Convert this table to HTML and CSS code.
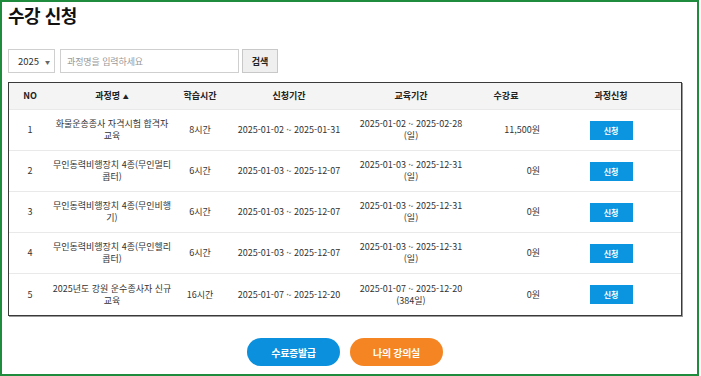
FILE: index.html
```html
<!DOCTYPE html>
<html lang="ko">
<head>
<meta charset="utf-8">
<title>수강 신청</title>
<link rel="stylesheet" href="styles.css">
</head>
<body>
<div class="frame">
  <h1 class="title">수강 신청</h1>
  <form class="search">
    <div class="select"><span>2025</span><span class="arrow">▼</span></div>
    <input class="keyword" type="text" placeholder="과정명을 입력하세요">
    <button class="btn-search" type="button">검색</button>
  </form>
  <table class="courses">
    <colgroup>
      <col class="c-no"><col class="c-name"><col class="c-hour"><col class="c-apply"><col class="c-edu"><col class="c-fee"><col class="c-btn">
    </colgroup>
    <thead>
      <tr><th>NO</th><th>과정명 <span class="sort">▲</span></th><th>학습시간</th><th>신청기간</th><th>교육기간</th><th>수강료</th><th>과정신청</th></tr>
    </thead>
    <tbody>
      <tr><td>1</td><td class="name">화물운송종사 자격시험 합격자 교육</td><td>8시간</td><td>2025-01-02 ~ 2025-01-31</td><td>2025-01-02 ~ 2025-02-28<br>(일)</td><td class="fee">11,500원</td><td><button class="btn-apply" type="button">신청</button></td></tr>
      <tr><td>2</td><td class="name">무인동력비행장치 4종(무인멀티콥터)</td><td>6시간</td><td>2025-01-03 ~ 2025-12-07</td><td>2025-01-03 ~ 2025-12-31<br>(일)</td><td class="fee">0원</td><td><button class="btn-apply" type="button">신청</button></td></tr>
      <tr><td>3</td><td class="name">무인동력비행장치 4종(무인비행기)</td><td>6시간</td><td>2025-01-03 ~ 2025-12-07</td><td>2025-01-03 ~ 2025-12-31<br>(일)</td><td class="fee">0원</td><td><button class="btn-apply" type="button">신청</button></td></tr>
      <tr><td>4</td><td class="name">무인동력비행장치 4종(무인헬리콥터)</td><td>6시간</td><td>2025-01-03 ~ 2025-12-07</td><td>2025-01-03 ~ 2025-12-31<br>(일)</td><td class="fee">0원</td><td><button class="btn-apply" type="button">신청</button></td></tr>
      <tr><td>5</td><td class="name">2025년도 강원 운수종사자 신규 교육</td><td>16시간</td><td>2025-01-07 ~ 2025-12-20</td><td>2025-01-07 ~ 2025-12-20<br>(384일)</td><td class="fee">0원</td><td><button class="btn-apply" type="button">신청</button></td></tr>
    </tbody>
  </table>
  <div class="actions">
    <a class="pill pill-blue" href="#">수료증발급</a>
    <a class="pill pill-orange" href="#">나의 강의실</a>
  </div>
</div>
</body>
</html>
```

FILE: styles.css
```css
html, body {
  margin: 0;
  padding: 0;
  background: #fff;
}
body {
  width: 701px;
  height: 376px;
  font-family: "Noto Sans CJK KR", "Noto Sans", sans-serif;
  color: #333;
}
.frame {
  box-sizing: border-box;
  width: 699px;
  height: 376px;
  border: 2px solid #1f8b3d;
  padding: 0 15px 0 6px;
}
.title {
  margin: 0;
  padding-top: 1px;
  font-size: 18px;
  line-height: 24px;
  font-weight: 700;
  color: #111;
  letter-spacing: -0.5px;
}
.search {
  display: flex;
  align-items: stretch;
  height: 24px;
  margin: 22px 0 0;
}
.select {
  box-sizing: border-box;
  width: 47px;
  display: flex;
  align-items: center;
  justify-content: space-between;
  padding: 0 4px 0 9px;
  border: 1px solid #cfcfcf;
  font-size: 9.5px;
  color: #333;
}
.arrow {
  font-size: 5px;
  color: #666;
}
.keyword {
  box-sizing: border-box;
  width: 179px;
  margin-left: 5px;
  padding: 0 6px;
  border: 1px solid #cfcfcf;
  font-family: inherit;
  font-size: 9px;
  letter-spacing: -0.1px;
  outline: none;
}
.keyword::placeholder {
  color: #999;
}
.btn-search {
  box-sizing: border-box;
  width: 36px;
  margin-left: 3px;
  padding: 0;
  border: 1px solid #c8c8c8;
  background: #efefef;
  font-family: inherit;
  font-size: 9px;
  font-weight: 700;
  color: #222;
}
.courses {
  width: 674px;
  margin-top: 9px;
  table-layout: fixed;
  border-collapse: separate;
  border-spacing: 0;
  border: 1px solid #3a3a3a;
  box-shadow: 1px 1px 0 #9a9a9a;
  font-size: 9px;
  line-height: 12px;
}
.c-no { width: 42px; }
.c-name { width: 122px; }
.c-hour { width: 54px; }
.c-apply { width: 124px; }
.c-edu { width: 120px; }
.c-fee { width: 70px; }
.c-btn { width: 140px; }
.courses th {
  height: 26px;
  padding: 0 2px;
  background: #f4f4f4;
  border-bottom: 1px solid #e9e9e9;
  font-weight: 700;
  color: #222;
  text-align: center;
}
.sort {
  font-size: 6px;
}
.courses td {
  height: 40px;
  padding: 0 4px;
  border-bottom: 1px solid #e9e9e9;
  text-align: center;
  vertical-align: middle;
  color: #333;
}
.courses td.name {
  padding: 0 1px;
}
.courses tbody tr:last-child td {
  border-bottom: 0;
  height: 41px;
}
.courses td.fee {
  text-align: right;
  padding-right: 1px;
}
.btn-apply {
  width: 43px;
  height: 19px;
  padding: 0;
  border: 0;
  background: #0b95e0;
  color: #fff;
  font-family: inherit;
  font-size: 8px;
  font-weight: 700;
  vertical-align: middle;
}
.actions {
  width: 674px;
  display: flex;
  justify-content: center;
  gap: 10px;
  margin-top: 22px;
}
.pill {
  width: 93px;
  height: 28px;
  border-radius: 14px;
  display: flex;
  align-items: center;
  justify-content: center;
  color: #fff;
  font-size: 10px;
  font-weight: 700;
  text-decoration: none;
  letter-spacing: -0.3px;
}
.pill-blue { background: #0a90dc; }
.pill-orange { background: #f58423; }
```
